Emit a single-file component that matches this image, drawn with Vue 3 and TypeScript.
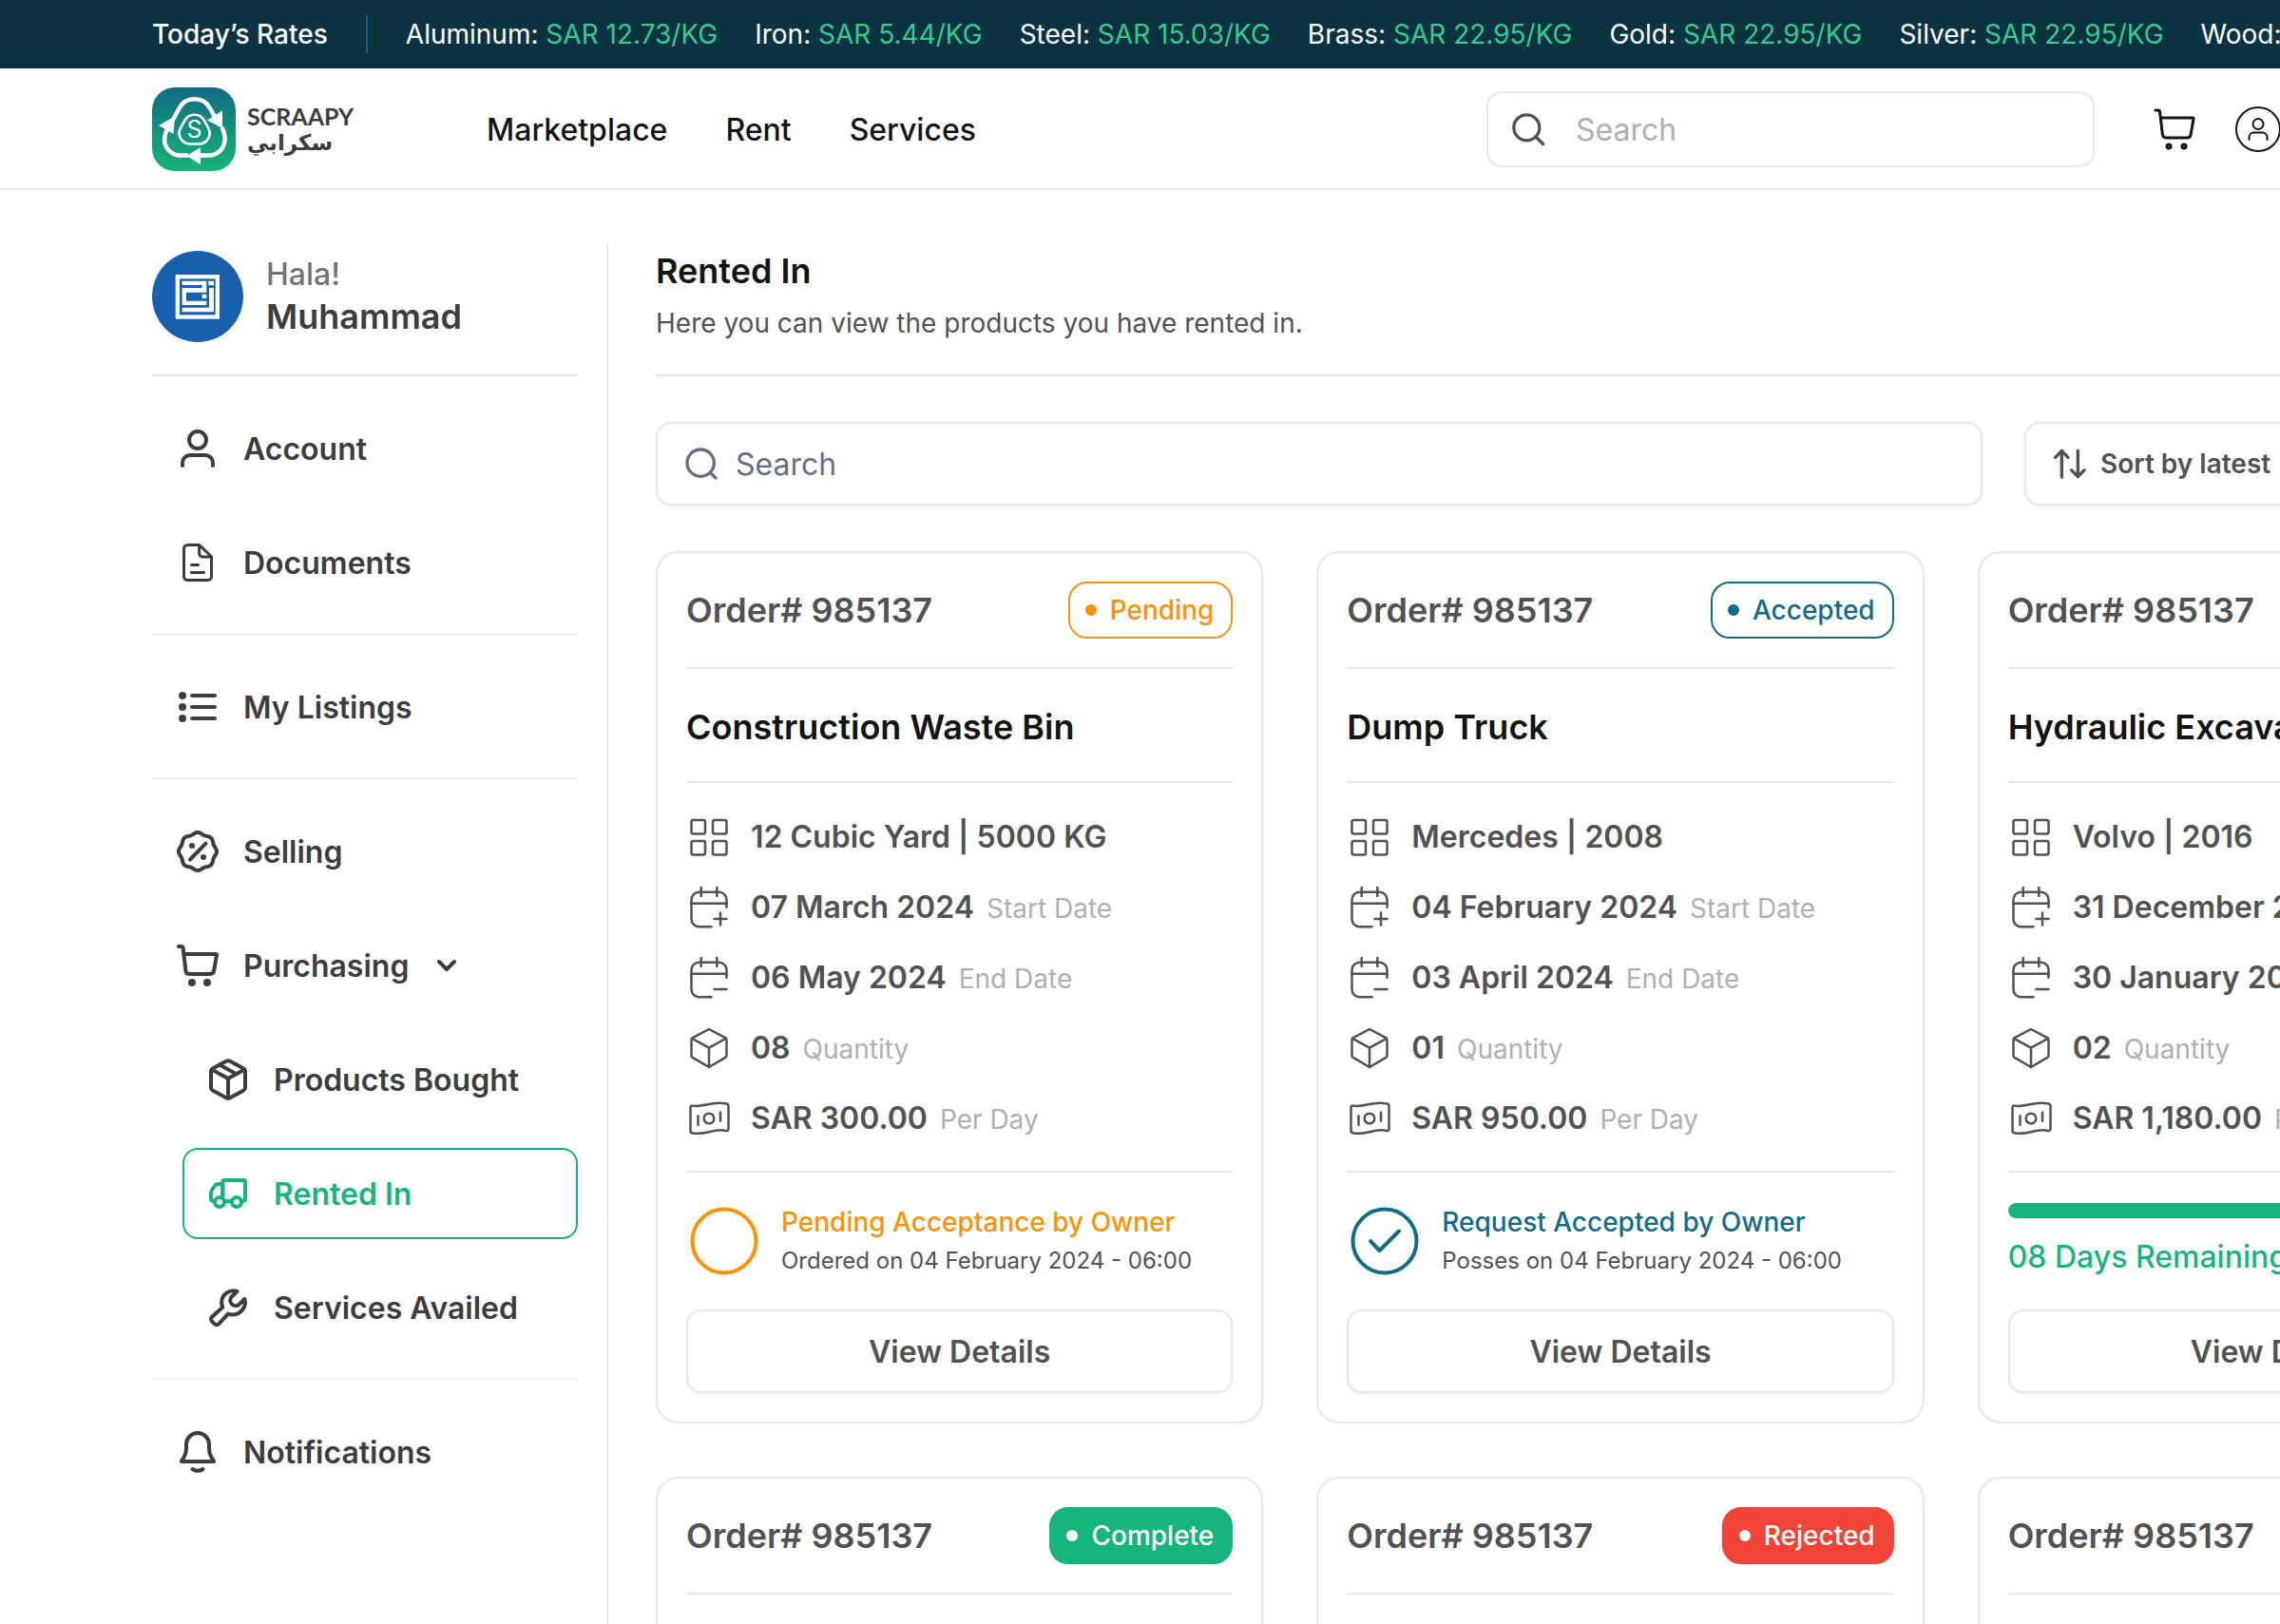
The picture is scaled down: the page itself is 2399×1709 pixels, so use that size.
<script setup lang="ts">
import { h, type FunctionalComponent } from 'vue'

interface Glyph {
  strokes?: string[]
  fills?: string[]
}

const circle = (cx: number, cy: number, r: number): string =>
  `M${cx - r} ${cy}a${r} ${r} 0 1 0 ${2 * r} 0a${r} ${r} 0 1 0 ${-2 * r} 0z`

// Eight-lobed badge outline used by the "Selling" icon.
const scallop = (): string => {
  const points: string[] = []
  for (let i = 0; i < 120; i++) {
    const a = (i / 120) * Math.PI * 2
    const r = 19.1 + 0.9 * Math.cos(8 * a)
    points.push(`${(24 + r * Math.cos(a)).toFixed(2)} ${(24 + r * Math.sin(a)).toFixed(2)}`)
  }
  return `M${points.join('L')}z`
}

const cartBody =
  'M4 4h2.6a2 2 0 0 1 2 1.8L11.4 29.6a4 4 0 0 0 4 3.4h21.8a4 4 0 0 0 3.9-3.3L44 13a.8.8 0 0 0-.8-1H9.6'
const calendar = [
  'M26.5 45.2H13.5a8 8 0 0 1-8-8V16.7a8 8 0 0 1 8-8h21a8 8 0 0 1 8 8v8',
  'M5.5 20.7h37M15.7 4v9M32.3 4v9',
]

const glyphs: Record<string, Glyph> = {
  user: { strokes: [circle(24, 15, 9), 'M8 42v-3a8 8 0 0 1 8-8h16a8 8 0 0 1 8 8v3'] },
  document: {
    strokes: [
      'M24.6 5.5H13.5a4 4 0 0 0-4 4v29a4 4 0 0 0 4 4h21a4 4 0 0 0 4-4V18.8a2.5 2.5 0 0 0-.8-1.8L26.4 6.2a2.5 2.5 0 0 0-1.8-.7z',
      'M25.6 6v8.5a3.4 3.4 0 0 0 3.4 3.4h9',
      'M17.4 26.4h7.2M17.4 34.4h13.2',
    ],
  },
  list: {
    strokes: ['M18 12h24M18 24h24M18 36h24'],
    fills: [circle(8, 12, 4), circle(8, 24, 4), circle(8, 36, 4)],
  },
  discount: {
    strokes: [scallop(), 'M16 32.5l16.5-16.8'],
    fills: [circle(18, 18, 3), circle(30, 30, 3)],
  },
  cart: { strokes: [cartBody], fills: [circle(18, 42, 4), circle(34, 42, 4)] },
  cartThin: { strokes: [cartBody, circle(18, 42, 2), circle(34, 42, 2)] },
  profile: {
    strokes: [
      circle(24, 24, 23),
      circle(24, 18.5, 5.5),
      'M14.5 35v-2.4a5 5 0 0 1 5-5h9a5 5 0 0 1 5 5V35',
    ],
  },
  package: {
    strokes: [
      'M22.4 4.6a3.4 3.4 0 0 1 3.2 0L40.3 12.4a3.2 3.2 0 0 1 1.7 2.8v17.6a3.2 3.2 0 0 1-1.7 2.8L25.6 43.4a3.4 3.4 0 0 1-3.2 0L7.7 35.6A3.2 3.2 0 0 1 6 32.8V15.2a3.2 3.2 0 0 1 1.7-2.8z',
      'M6.8 13.6L24 23l17.2-9.4M24 23v20.5M15.2 8.6l17.5 9.6',
    ],
  },
  truck: {
    strokes: [
      'M18.3 27V12a2 2 0 0 1 2-2H40a2 2 0 0 1 2 2v17a3 3 0 0 1-2.6 3M21.5 32h5',
      'M18.3 14h-5a4 4 0 0 0-3.4 2L7 20.3a6 6 0 0 0-1 3.4V29a3 3 0 0 0 2.4 3M18.3 14v14',
      circle(15, 33, 5),
      circle(33, 33, 5),
    ],
  },
  wrench: {
    strokes: [
      'M33.5 6.8A12.6 12.6 0 0 0 17.2 19.5l1 4.2L6.9 34a3 3 0 0 0-.1 4.2l3 3.1a3 3 0 0 0 4.2 0L24 30.6l2.6.6A13 13 0 0 0 41.4 15l-5.6 5.5a5.6 5.6 0 0 1-7.9-8z',
    ],
  },
  bell: {
    strokes: [
      'M24 4a12 12 0 0 0-12 12v4.5c0 3.5-.8 6.5-2.6 9.2L7 33.5a.3.3 0 0 0 .3.5h33.4a.3.3 0 0 0 .3-.5l-2.4-3.8c-1.8-2.7-2.6-5.7-2.6-9.2V16A12 12 0 0 0 24 4z',
      'M18.5 42a10 10 0 0 0 11 0',
    ],
  },
  chevron: { strokes: ['M16 20l8 8 8-8'] },
  search: {
    strokes: ['M42 42l-7-7M40 23a17 17 0 1 1-34 0a17 17 0 1 1 34 0z'],
  },
  find: { strokes: [circle(22, 22, 16.2), 'M33.6 33.6l9 9'] },
  sort: {
    strokes: ['M13.6 41V8M5.6 16l8-8.4 8 8.4', 'M34 7.5V40M25.8 32l8.2 8.4 8.2-8.4'],
  },
  grid: {
    strokes: [
      'M7.5 7h10.5a2 2 0 0 1 2 2v10.5a2 2 0 0 1-2 2H7.5a2 2 0 0 1-2-2V9a2 2 0 0 1 2-2z',
      'M30 7h10.5a2 2 0 0 1 2 2v10.5a2 2 0 0 1-2 2H30a2 2 0 0 1-2-2V9a2 2 0 0 1 2-2z',
      'M7.5 29h10.5a2 2 0 0 1 2 2v10.5a2 2 0 0 1-2 2H7.5a2 2 0 0 1-2-2V31a2 2 0 0 1 2-2z',
      'M30 29h10.5a2 2 0 0 1 2 2v10.5a2 2 0 0 1-2 2H30a2 2 0 0 1-2-2V31a2 2 0 0 1 2-2z',
    ],
  },
  calendarPlus: { strokes: [...calendar, 'M29.5 37h13M36 30.5v13'] },
  calendarMinus: { strokes: [...calendar, 'M29.5 37h13'] },
  cube: {
    strokes: [
      'M24 5l17.2 9.2a2.4 2.4 0 0 1 1.3 2.1v16.4a2.4 2.4 0 0 1-1.3 2.1L24 45 6.8 34.8a2.4 2.4 0 0 1-1.3-2.1V16.3a2.4 2.4 0 0 1 1.3-2.1z',
      'M6.2 14.8L24 24.6l17.8-9.8M24 24.6V45',
    ],
  },
  money: {
    strokes: [
      'M6.5 11.6C18 14 25 6.5 41.5 9.2A3 3 0 0 1 44.500 12v24a2 2 0 0 1-2.5 2C28 34.5 22 43.5 6.5 40.3a2.5 2.5 0 0 1-2-2.5V13.3a1.7 1.7 0 0 1 2-1.7z',
      circle(24, 25, 5.3),
      'M12.5 22.3v9.5M36 18.7v9',
    ],
  },
}

const Icon: FunctionalComponent<{ name: string; size?: number; weight?: number }> = (props) => {
  const glyph = glyphs[props.name]
  const size = props.size ?? 48
  return h(
    'svg',
    {
      width: size,
      height: size,
      viewBox: '0 0 48 48',
      fill: 'none',
      stroke: 'currentColor',
      'stroke-width': props.weight ?? 4,
      'stroke-linecap': 'round',
      'stroke-linejoin': 'round',
      'aria-hidden': 'true',
    },
    [
      ...(glyph.strokes ?? []).map((d) => h('path', { d })),
      ...(glyph.fills ?? []).map((d) => h('path', { d, fill: 'currentColor', stroke: 'none' })),
    ],
  )
}
Icon.props = ['name', 'size', 'weight']

const rates = [
  { metal: 'Aluminum', price: 'SAR 12.73/KG' },
  { metal: 'Iron', price: 'SAR 5.44/KG' },
  { metal: 'Steel', price: 'SAR 15.03/KG' },
  { metal: 'Brass', price: 'SAR 22.95/KG' },
  { metal: 'Gold', price: 'SAR 22.95/KG' },
  { metal: 'Silver', price: 'SAR 22.95/KG' },
  { metal: 'Wood', price: 'SAR 22.95/KG' },
]

interface MenuItem {
  label: string
  icon: string
  sub?: boolean
  active?: boolean
  open?: boolean
}

const menu: MenuItem[][] = [
  [
    { label: 'Account', icon: 'user' },
    { label: 'Documents', icon: 'document' },
  ],
  [{ label: 'My Listings', icon: 'list' }],
  [
    { label: 'Selling', icon: 'discount' },
    { label: 'Purchasing', icon: 'cart', open: true },
    { label: 'Products Bought', icon: 'package', sub: true },
    { label: 'Rented In', icon: 'truck', sub: true, active: true },
    { label: 'Services Availed', icon: 'wrench', sub: true },
  ],
  [{ label: 'Notifications', icon: 'bell' }],
]

interface Order {
  status: string
  tone: string
  title: string
  spec: string
  start: string
  end: string
  quantity: string
  price: string
  note?: string
  when?: string
  remaining?: string
  progress?: number
}

const orders: Order[] = [
  {
    status: 'Pending', tone: 'pending', title: 'Construction Waste Bin', spec: '12 Cubic Yard | 5000 KG',
    start: '07 March 2024', end: '06 May 2024', quantity: '08', price: 'SAR 300.00',
    note: 'Pending Acceptance by Owner', when: 'Ordered on 04 February 2024 - 06:00',
  },
  {
    status: 'Accepted', tone: 'accepted', title: 'Dump Truck', spec: 'Mercedes | 2008',
    start: '04 February 2024', end: '03 April 2024', quantity: '01', price: 'SAR 950.00',
    note: 'Request Accepted by Owner', when: 'Posses on 04 February 2024 - 06:00',
  },
  {
    status: 'Active', tone: 'active', title: 'Hydraulic Excavator', spec: 'Volvo | 2016',
    start: '31 December 2023', end: '30 January 2024', quantity: '02', price: 'SAR 1,180.00',
    remaining: '08 Days Remaining', progress: 75,
  },
  {
    status: 'Complete', tone: 'complete', title: 'Construction Waste Bin', spec: '12 Cubic Yard | 5000 KG',
    start: '07 March 2024', end: '06 May 2024', quantity: '08', price: 'SAR 300.00',
    note: 'Rental Completed', when: 'Returned on 04 February 2024 - 06:00',
  },
  {
    status: 'Rejected', tone: 'rejected', title: 'Dump Truck', spec: 'Mercedes | 2008',
    start: '04 February 2024', end: '03 April 2024', quantity: '01', price: 'SAR 950.00',
    note: 'Request Rejected by Owner', when: 'Rejected on 04 February 2024 - 06:00',
  },
  {
    status: 'Active', tone: 'active', title: 'Hydraulic Excavator', spec: 'Volvo | 2016',
    start: '31 December 2023', end: '30 January 2024', quantity: '02', price: 'SAR 1,180.00',
    remaining: '08 Days Remaining', progress: 75,
  },
]

const details = (order: Order) => [
  { icon: 'grid', value: order.spec, label: '' },
  { icon: 'calendarPlus', value: order.start, label: 'Start Date' },
  { icon: 'calendarMinus', value: order.end, label: 'End Date' },
  { icon: 'cube', value: order.quantity, label: 'Quantity' },
  { icon: 'money', value: order.price, label: 'Per Day' },
]
</script>

<template>
  <div class="viewport">
    <div class="page">
      <section class="rates" aria-label="Today’s Rates">
        <strong class="rates-title">Today’s Rates</strong>
        <span class="rates-rule"></span>
        <ul class="rates-list">
          <li v-for="rate in rates" :key="rate.metal">
            {{ rate.metal }}: <span class="price">{{ rate.price }}</span>
          </li>
        </ul>
      </section>

      <header class="topbar">
        <a class="brand" href="#" aria-label="Scraapy home">
          <svg class="mark" viewBox="0 0 88 88" width="88" height="88" aria-hidden="true">
            <defs>
              <linearGradient id="brand-fill" x1="0" y1="0" x2="0" y2="1">
                <stop offset="0" stop-color="#136b84" />
                <stop offset="1" stop-color="#17b478" />
              </linearGradient>
            </defs>
            <rect width="88" height="88" rx="24" fill="url(#brand-fill)" />
            <g fill="none" stroke="#fff" stroke-width="4.5">
              <path d="M21 36L28.5 22a18.5 18.5 0 0 1 32.5 0L67 33" />
              <path d="M73.5 42c2.5 5 3.5 9 3 14A17 17 0 0 1 60 71.5H50" />
              <path d="M16 44c-3 6-3.6 10-2.5 15A17 17 0 0 0 29.5 71.5H38" />
              <path stroke-width="2.6" d="M34.5 34.5a11.8 11.8 0 0 1 20.3 0l4.5 8.5A11.3 11.3 0 0 1 49.5 59.5h-10A11.3 11.3 0 0 1 29.8 43z" />
            </g>
            <g fill="#fff">
              <path d="M7 40l17-9.5-1.5 18.5zM74 24.5V43L58 34.5zM36.5 72L51 63v18z" />
              <text x="44.6" y="53" text-anchor="middle" font-size="25">S</text>
            </g>
          </svg>
          <span class="wordmark">
            <span class="latin">SCRAAPY</span>
            <span class="arabic" lang="ar" dir="rtl">سكرابي</span>
          </span>
        </a>
        <nav class="links" aria-label="Main">
          <a href="#">Marketplace</a>
          <a href="#">Rent</a>
          <a href="#">Services</a>
        </nav>
        <label class="top-search">
          <Icon name="find" :size="40" :weight="4" />
          <input type="search" placeholder="Search" aria-label="Search the marketplace" />
        </label>
        <div class="actions">
          <button type="button" aria-label="Cart"><Icon name="cartThin" :weight="3" /></button>
          <button type="button" aria-label="Profile"><Icon name="profile" :weight="2" /></button>
        </div>
      </header>

      <div class="body">
        <aside class="sidebar">
          <div class="profile">
            <svg viewBox="0 0 288 288" width="96" height="96" aria-hidden="true">
              <circle cx="144" cy="144" r="144" fill="#1860ae" />
              <rect x="80.5" y="81.5" width="126" height="127" fill="none" stroke="#fff" stroke-width="13" />
              <path
                fill="#fff"
                d="M95 95h77v36H108v27h64v13H95v-54h63v-9H95zM158 137h14v13h-14zM178 95h17v14h-17zM180 117h15v76H95v-14h85z"
              />
            </svg>
            <div class="greeting">
              <p class="hello">Hala!</p>
              <p class="name">Muhammad</p>
            </div>
          </div>
          <nav aria-label="Account">
            <ul v-for="(group, index) in menu" :key="index" class="group">
              <li v-for="item in group" :key="item.label">
                <a href="#" class="entry" :class="{ sub: item.sub, active: item.active }">
                  <Icon :name="item.icon" :weight="item.icon === 'document' ? 3 : 4" />
                  <span>{{ item.label }}</span>
                  <Icon v-if="item.open" name="chevron" :size="48" :weight="4" class="caret" />
                </a>
              </li>
            </ul>
          </nav>
        </aside>

        <main class="content">
          <div class="heading">
            <h1>Rented In</h1>
            <p>Here you can view the products you have rented in.</p>
          </div>
          <div class="filters">
            <label class="search">
              <Icon name="search" :size="40" :weight="4" />
              <input type="search" placeholder="Search" aria-label="Search rented products" />
            </label>
            <button type="button" class="sort">
              <Icon name="sort" :size="40" :weight="4" />
              Sort by latest
            </button>
          </div>

          <div class="cards">
            <article v-for="(order, index) in orders" :key="index" class="card" :class="order.tone">
              <div class="card-top">
                <span class="order">Order# 985137</span>
                <span class="badge"><span class="dot"></span>{{ order.status }}</span>
              </div>
              <h2>{{ order.title }}</h2>
              <ul class="details">
                <li v-for="detail in details(order)" :key="detail.icon">
                  <Icon :name="detail.icon" :weight="2.5" />
                  <span class="detail">
                    <span class="value">{{ detail.value }}</span>
                    <span v-if="detail.label" class="label">{{ detail.label }}</span>
                  </span>
                </li>
              </ul>
              <div v-if="order.remaining" class="remaining">
                <div class="track"><div class="bar" :style="{ width: order.progress + '%' }"></div></div>
                <p>{{ order.remaining }}</p>
              </div>
              <div v-else class="status">
                <svg viewBox="0 0 80 80" width="80" height="80" fill="none" stroke="currentColor" stroke-width="4" stroke-linecap="round" stroke-linejoin="round" aria-hidden="true">
                  <circle cx="40" cy="40" r="33.5" />
                  <path v-if="order.tone === 'rejected'" d="M30 30l20 20M50 30L30 50" />
                  <path v-else-if="order.tone !== 'pending'" d="M25 40l9.5 10L55 29.5" />
                </svg>
                <div>
                  <p class="note">{{ order.note }}</p>
                  <p class="when">{{ order.when }}</p>
                </div>
              </div>
              <button type="button" class="view">View Details</button>
            </article>
          </div>
        </main>
      </div>
    </div>
  </div>
</template>

<style>
body {
  margin: 0;
}
</style>

<style scoped>
.viewport {
  height: 100vh;
  overflow: hidden;
  background: #fff;
  color: #525252;
  font-family: Inter, "Noto Sans", "DejaVu Sans", sans-serif;
  font-size: 32px;
}
.page {
  min-width: 2880px;
}
p,
h1,
h2,
ul {
  margin: 0;
  padding: 0;
}
ul {
  list-style: none;
}
a {
  color: inherit;
  text-decoration: none;
}
svg {
  display: block;
  flex: none;
}
button,
input {
  font: inherit;
  color: inherit;
  background: none;
  border: 0;
  padding: 0;
  outline: none;
  box-sizing: border-box;
}
button {
  cursor: pointer;
}

/* Rates ticker */
.rates {
  display: flex;
  align-items: center;
  gap: 40px;
  height: 72px;
  padding-left: 160px;
  background: #0c3342;
  color: #fff;
  font-size: 28px;
  white-space: nowrap;
}
.rates-title {
  font-weight: 500;
}
.rates-rule {
  width: 2px;
  height: 40px;
  background: #195f76;
}
.rates-list {
  display: flex;
  gap: 39px;
}
.price {
  color: #36cb8c;
}

/* Header */
.topbar {
  display: flex;
  align-items: center;
  padding: 20px 160px 18px;
  border-bottom: 2px solid #e7e7e7;
}
.brand {
  display: flex;
  align-items: center;
  gap: 12px;
  flex: none;
  width: 352px;
}
.wordmark {
  display: flex;
  flex-direction: column;
  align-items: flex-start;
  color: #3d3d3d;
}
.latin {
  font-family: Lato, sans-serif;
  font-weight: 700;
  font-size: 25px;
  line-height: 28px;
}
.arabic {
  font-family: "DejaVu Sans", sans-serif;
  font-weight: 700;
  font-size: 23px;
  line-height: 28px;
}
.links {
  display: flex;
  gap: 61px;
  flex: 1;
  color: #141414;
  font-weight: 500;
}
.top-search {
  display: flex;
  align-items: center;
  gap: 30px;
  box-sizing: border-box;
  width: 640px;
  height: 80px;
  padding: 0 22px;
  border: 2px solid #e7e7e7;
  border-radius: 16px;
}
input {
  flex: 1;
  min-width: 0;
}
input::placeholder {
  color: #b0b0b0;
  opacity: 1;
}
.actions {
  display: flex;
  gap: 40px;
  box-sizing: border-box;
  width: 516px;
  padding-left: 60px;
  color: #141414;
}

/* Body */
.body {
  display: flex;
  align-items: stretch;
  margin-top: 56px;
  padding: 0 160px;
}
.sidebar {
  flex: none;
  width: 448px;
  padding: 8px 31px 0 0;
  border-right: 1px solid #dcdcdc;
  color: #3d3d3d;
}
.profile {
  display: flex;
  align-items: center;
  gap: 24px;
  padding-bottom: 34px;
  border-bottom: 2px solid #e7e7e7;
}
.greeting {
  padding-bottom: 2px;
}
.hello {
  color: #737373;
  font-weight: 500;
  line-height: 44px;
}
.name {
  font-size: 36px;
  font-weight: 600;
  line-height: 44px;
}
.group {
  display: flex;
  flex-direction: column;
  gap: 24px;
  padding: 28px 0 27px;
  border-bottom: 1px solid #e7e7e7;
}
.group:last-child {
  border-bottom: 0;
}
.entry {
  display: flex;
  align-items: center;
  gap: 24px;
  box-sizing: border-box;
  height: 96px;
  padding: 0 22px;
  border: 2px solid transparent;
  border-radius: 16px;
  font-weight: 600;
}
.entry.sub {
  margin-left: 32px;
}
.entry.active {
  border-color: #17b47b;
  color: #17b47b;
}
.caret {
  margin-left: -8px;
}

.content {
  flex: 1;
  min-width: 0;
  padding: 8px 0 56px 50px;
}
.heading {
  padding: 0 0 34px;
  border-bottom: 2px solid #e7e7e7;
}
h1 {
  color: #141414;
  font-size: 36px;
  font-weight: 600;
  line-height: 42px;
}
.heading p {
  padding-top: 14px;
  font-size: 28px;
  line-height: 40px;
}
.filters {
  display: flex;
  gap: 44px;
  padding: 48px 0;
}
.search,
.sort {
  display: flex;
  align-items: center;
  box-sizing: border-box;
  height: 88px;
  padding: 0 26px;
  border: 2px solid #e7e7e7;
  border-radius: 16px;
  box-shadow: 0 2px 4px rgba(16, 24, 40, 0.05);
}
.search {
  flex: 1;
  gap: 16px;
  color: #667085;
}
.search input::placeholder {
  color: #667085;
}
.sort {
  gap: 12px;
  width: 590px;
  font-size: 28px;
  font-weight: 600;
}

/* Order cards */
.cards {
  display: grid;
  grid-template-columns: repeat(3, minmax(0, 1fr));
  gap: 56px;
}
.card {
  padding: 30px;
  border: 2px solid #e7e7e7;
  border-radius: 24px;
  --tone: #17b47b;
}
.pending {
  --tone: #fa930a;
}
.accepted {
  --tone: #136c84;
}
.rejected {
  --tone: #f04438;
}
.card-top {
  display: flex;
  align-items: center;
  justify-content: space-between;
  padding-bottom: 30px;
  border-bottom: 2px solid #e7e7e7;
}
.order {
  font-size: 36px;
  font-weight: 600;
}
.badge {
  display: flex;
  align-items: center;
  gap: 14px;
  box-sizing: border-box;
  height: 60px;
  padding: 0 18px 0 16px;
  border: 2px solid var(--tone);
  border-radius: 20px;
  color: var(--tone);
  font-size: 28px;
  font-weight: 500;
}
.complete .badge,
.rejected .badge {
  background: var(--tone);
  color: #fff;
}
.dot {
  width: 12px;
  height: 12px;
  border-radius: 50%;
  background: currentColor;
}
h2 {
  padding: 33px 0 29px;
  border-bottom: 2px solid #e7e7e7;
  color: #141414;
  font-size: 36px;
  font-weight: 600;
  line-height: 56px;
}
.details {
  display: flex;
  flex-direction: column;
  gap: 26px;
  padding: 32px 0;
  border-bottom: 2px solid #e7e7e7;
}
.details li {
  display: flex;
  align-items: center;
  gap: 20px;
  height: 48px;
  white-space: nowrap;
}
.detail {
  display: flex;
  align-items: baseline;
  gap: 13px;
}
.value {
  font-weight: 600;
}
.label {
  color: #b0b0b0;
  font-size: 28px;
}
.status,
.remaining {
  height: 80px;
  padding: 32px 0;
}
.status {
  display: flex;
  gap: 20px;
  color: var(--tone);
}
.note {
  font-size: 28px;
  font-weight: 500;
  line-height: 40px;
}
.when {
  color: #525252;
  font-size: 24px;
  line-height: 42px;
}
.track {
  height: 16px;
  border-radius: 8px;
  background: #e7e7e7;
  overflow: hidden;
}
.bar {
  height: 100%;
  border-radius: 8px;
  background: var(--tone);
}
.remaining p {
  padding-top: 18px;
  color: var(--tone);
  font-weight: 500;
  line-height: 46px;
}
.view {
  width: 100%;
  height: 88px;
  border: 2px solid #e7e7e7;
  border-radius: 16px;
  box-shadow: 0 2px 4px rgba(16, 24, 40, 0.05);
  font-weight: 600;
}
</style>
